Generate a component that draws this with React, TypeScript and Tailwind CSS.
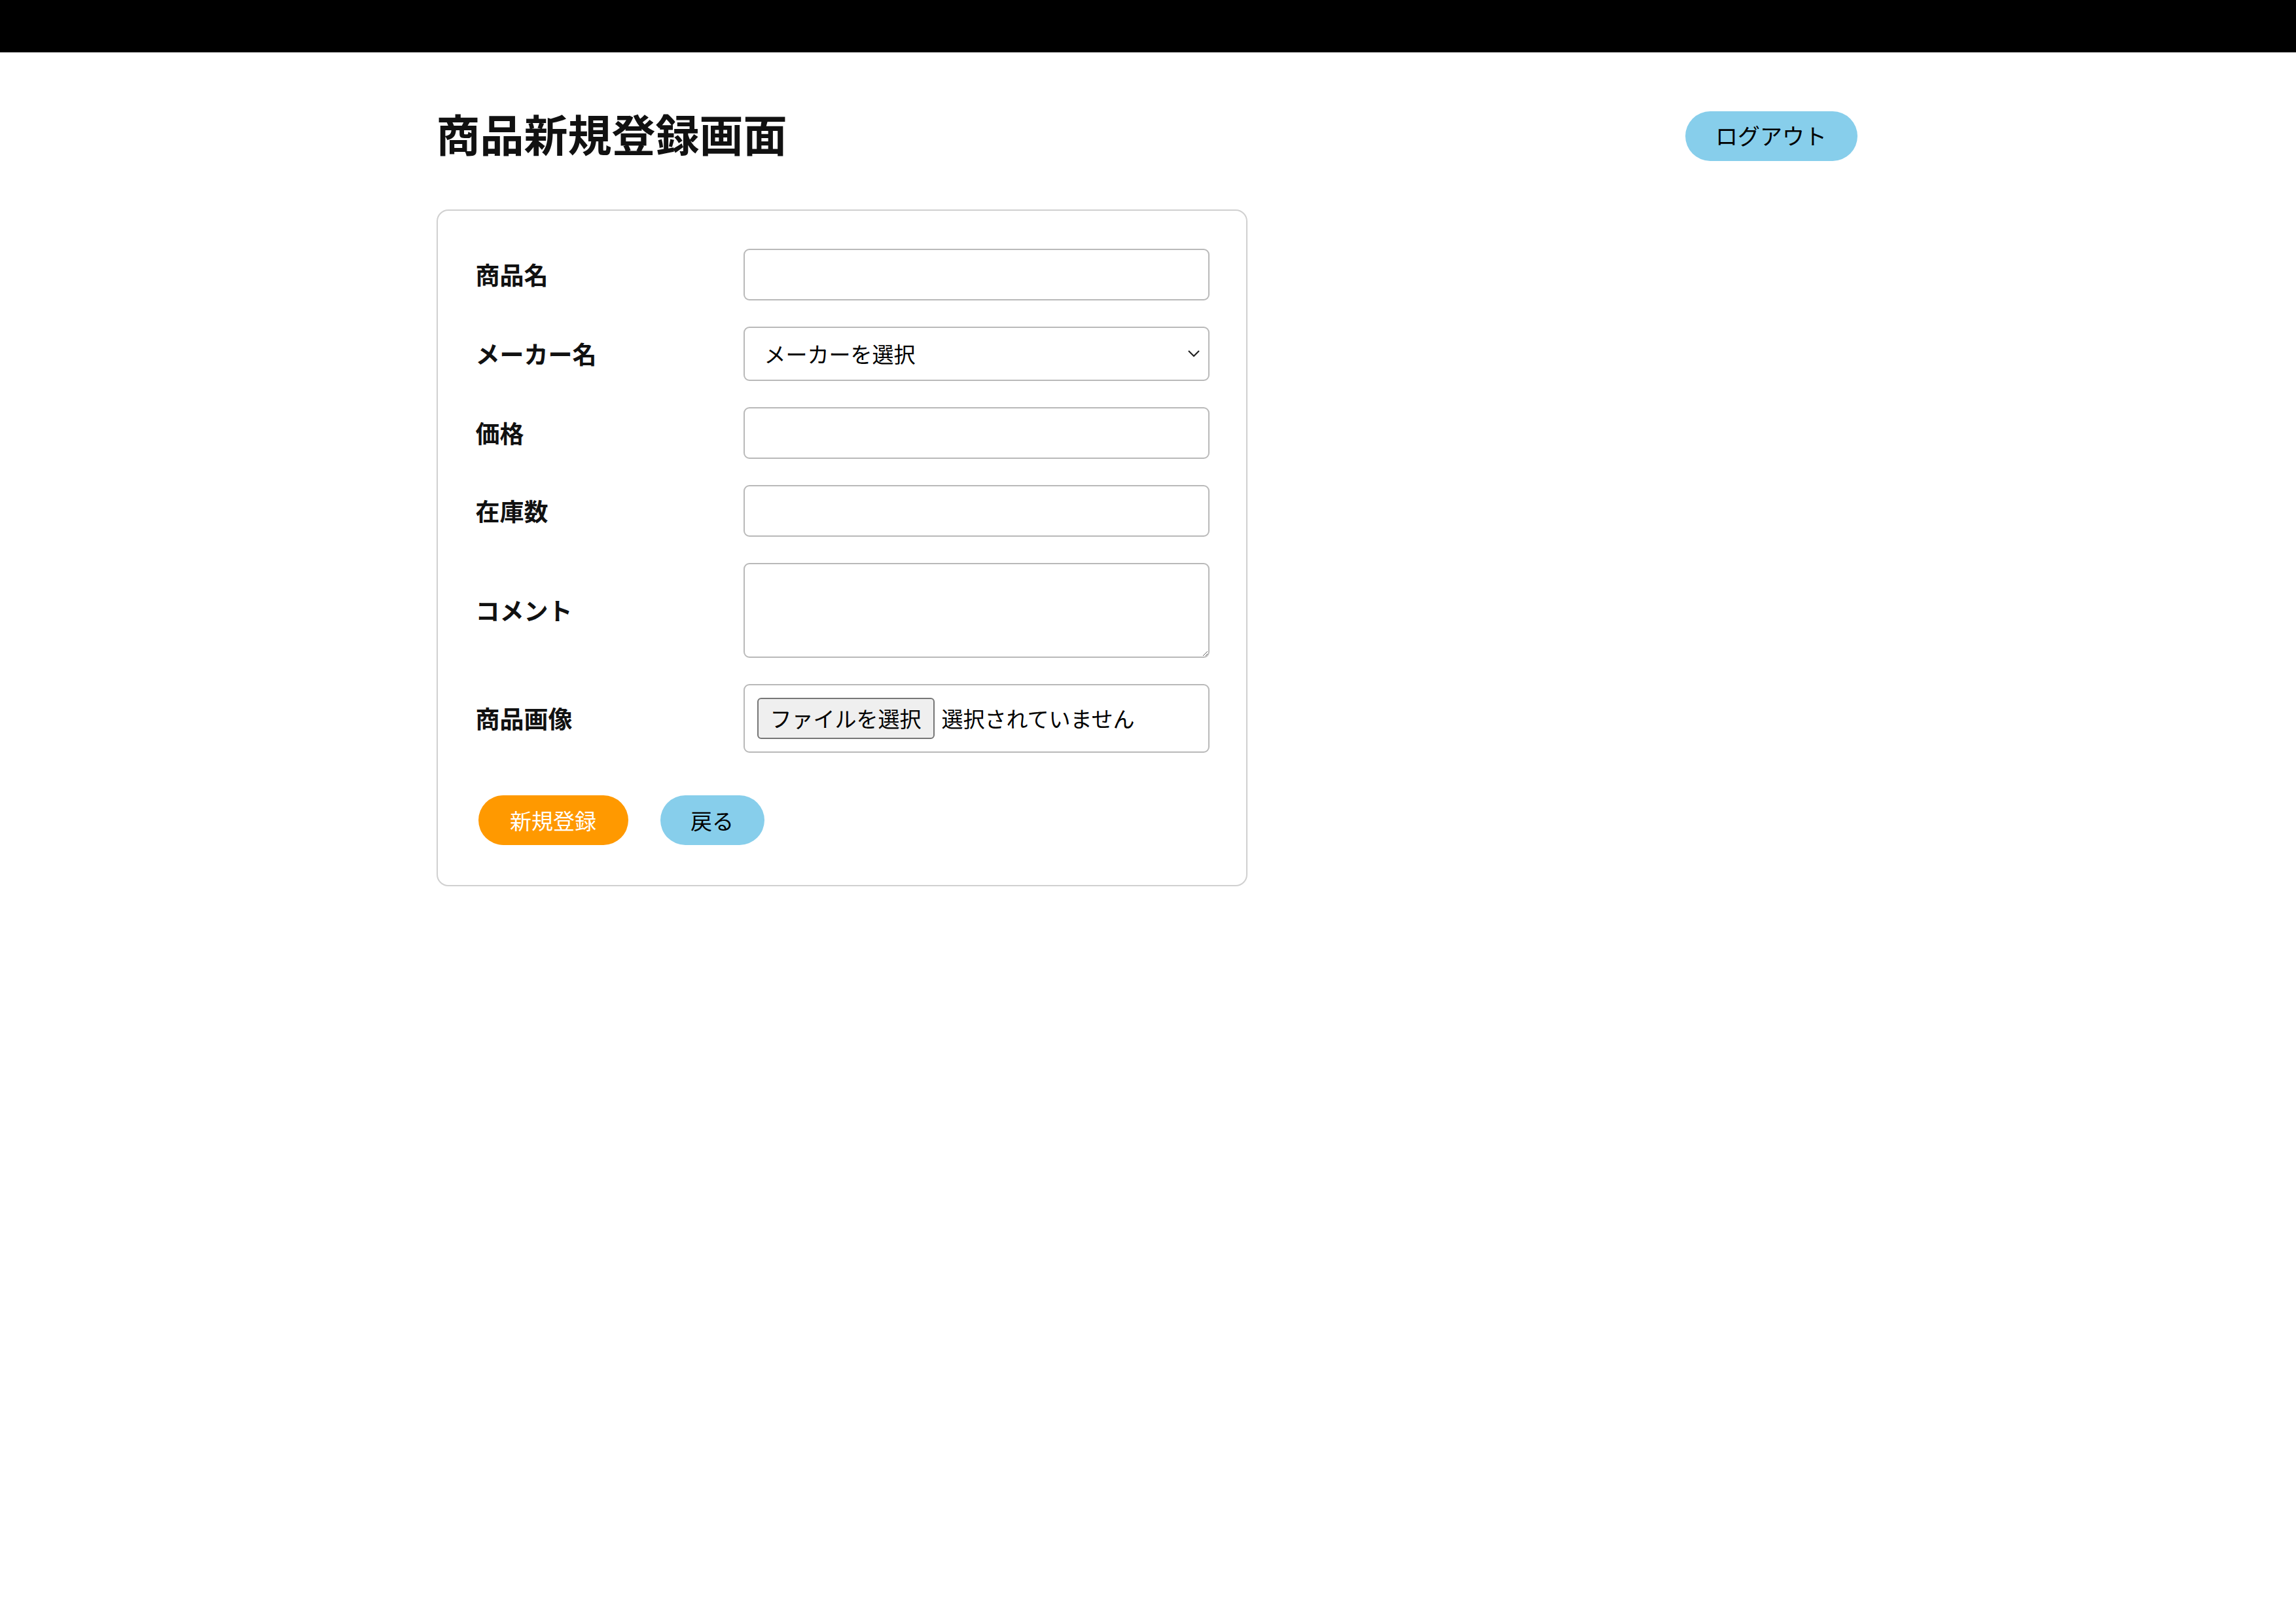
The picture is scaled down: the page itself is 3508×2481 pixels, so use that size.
import { useState } from "react";

const makers = ["メーカーを選択"];

function Field({ label, children }: { label: string; children: React.ReactNode }) {
  return (
    <div className="grid grid-cols-[409px_712px] items-center">
      <label className="text-[37px] font-bold leading-none text-[#111]">{label}</label>
      {children}
    </div>
  );
}

export default function App() {
  const [maker, setMaker] = useState("");

  return (
    <div className="min-h-screen bg-white font-['Noto_Sans_CJK_JP','Noto_Sans',sans-serif] text-black">
      <header className="h-[80px] w-full bg-black" />

      <div className="pr-[4px]">
        <main className="mx-auto w-[2171px]">
          <div className="mt-[90px] flex h-[76px] items-center justify-between">
            <h1 className="pb-[12px] text-[67px] font-bold leading-none text-[#111]">商品新規登録画面</h1>
            <button
              type="button"
              className="flex h-[76px] w-[263px] items-center justify-center rounded-full bg-[#87ceeb] pb-[3px] text-[34px] leading-none text-black"
            >
              ログアウト
            </button>
          </div>

          <form className="mt-[74px] w-[1239px] rounded-[18px] border-2 border-[#d0d0d0] pb-[61px] pl-[58px] pr-[56px] pt-[58px]">
            <div className="flex flex-col gap-[40px]">
              <Field label="商品名">
                <input
                  type="text"
                  className="h-[79px] w-full rounded-[9px] border-2 border-[#b9b9b9] px-[28px] text-[33px] outline-none"
                />
              </Field>

              <Field label="メーカー名">
                <div className="relative h-[83px] w-full">
                  <select
                    value={maker}
                    onChange={(e) => setMaker(e.target.value)}
                    className="h-full w-full appearance-none rounded-[9px] border-2 border-[#b9b9b9] bg-white pl-[30px] text-[33px] leading-none text-black outline-none"
                  >
                    <option value="">{makers[0]}</option>
                  </select>
                  <svg
                    className="pointer-events-none absolute right-[14px] top-[35px] h-[12px] w-[20px]"
                    viewBox="0 0 20 12"
                    fill="none"
                    stroke="#222"
                    strokeWidth="2.2"
                  >
                    <path d="M2 2 L10 10 L18 2" />
                  </svg>
                </div>
              </Field>

              <Field label="価格">
                <input
                  type="text"
                  className="h-[79px] w-full rounded-[9px] border-2 border-[#b9b9b9] px-[28px] text-[33px] outline-none"
                />
              </Field>

              <Field label="在庫数">
                <input
                  type="text"
                  className="h-[79px] w-full rounded-[9px] border-2 border-[#b9b9b9] px-[28px] text-[33px] outline-none"
                />
              </Field>

              <Field label="コメント">
                <textarea className="block h-[145px] w-full rounded-[9px] border-2 border-[#b9b9b9] px-[28px] py-[14px] text-[33px] outline-none" />
              </Field>

              <Field label="商品画像">
                <div className="flex h-[105px] w-full items-center gap-[11px] rounded-[9px] border-2 border-[#b9b9b9] px-[19px]">
                  <span className="flex h-[63px] items-center rounded-[6px] border-2 border-[#767676] bg-[#efefef] px-[18px] text-[33px] leading-none text-black">
                    ファイルを選択
                  </span>
                  <span className="text-[33px] leading-none text-black">選択されていません</span>
                </div>
              </Field>
            </div>

            <div className="mt-[65px] flex items-center gap-[49px] pl-[4px]">
              <button
                type="submit"
                className="flex h-[76px] w-[229px] items-center justify-center rounded-full bg-[#ff9900] text-[33px] leading-none text-white"
              >
                新規登録
              </button>
              <button
                type="button"
                className="flex h-[76px] w-[159px] items-center justify-center rounded-full bg-[#87ceeb] text-[33px] leading-none text-black"
              >
                戻る
              </button>
            </div>
          </form>
        </main>
      </div>
    </div>
  );
}
